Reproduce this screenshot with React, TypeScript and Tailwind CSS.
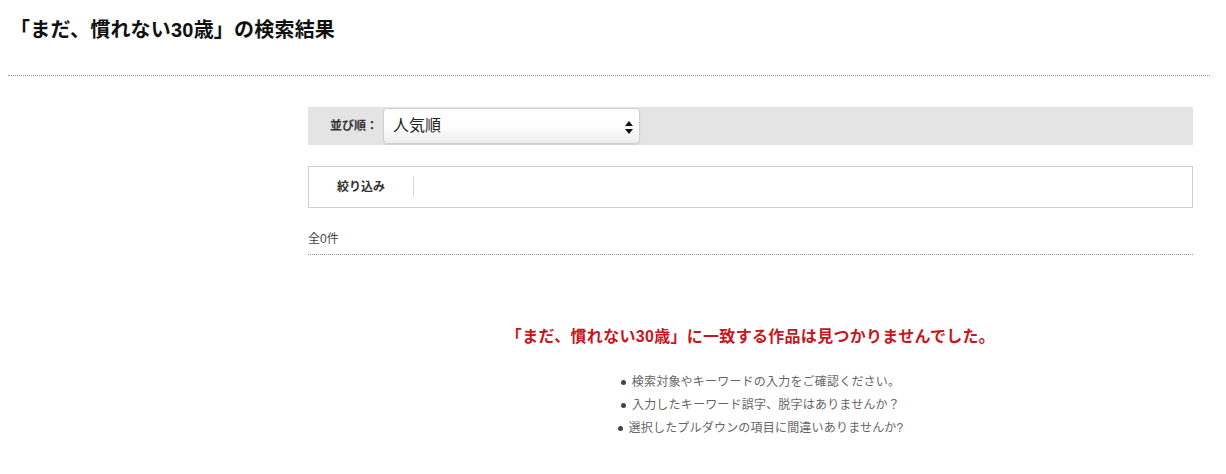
export default function App() {
  const tips = [
    '検索対象やキーワードの入力をご確認ください。',
    '入力したキーワード誤字、脱字はありませんか？',
    '選択したプルダウンの項目に間違いありませんか?',
  ];

  return (
    <div
      className="w-[1226px] h-[474px] bg-white text-[#333]"
      style={{ fontFamily: '"Liberation Sans", "Noto Sans CJK JP", sans-serif' }}
    >
      {/* Heading */}
      <div className="px-[10px] pt-[18px] h-[75px]">
        <h1 className="text-[20px] leading-[24px] font-bold tracking-[0.2px] text-[#111]">
          「まだ、慣れない30歳」の検索結果
        </h1>
      </div>
      <div className="mx-[8px] w-[1202px] border-t border-dotted border-[#999]" />

      {/* Main column */}
      <div className="ml-[308px] w-[885px] pt-[31px]">
        {/* Sort bar */}
        <div className="flex items-center h-[38px] bg-[#e4e4e4]">
          <span className="w-[75px] pl-[22px] text-[12px] font-bold text-[#333]">並び順：</span>
          <div className="relative flex items-center w-[257px] h-[36px] rounded-[4px] border border-[#d0d0d0] bg-gradient-to-b from-white via-white to-[#ededed] shadow-[0_1px_1px_rgba(0,0,0,0.08)]">
            <span className="pl-[9px] text-[16px] text-[#222]">人気順</span>
            <svg className="absolute right-[6px] top-[12px]" width="8" height="13" viewBox="0 0 8 13">
              <path d="M4 0 L8 5 L0 5 Z" fill="#111" />
              <path d="M0 8 L8 8 L4 13 Z" fill="#111" />
            </svg>
          </div>
        </div>

        {/* Filter */}
        <div className="mt-[21px] flex items-center h-[42px] border border-[#cfcfcf]">
          <span className="pl-[28px] w-[104px] text-[12px] font-bold text-[#333]">絞り込み</span>
          <div className="w-px h-[20px] bg-[#d6d6d6]" />
        </div>

        {/* Count */}
        <div className="pt-[23px] pb-[7px] text-[12px] leading-[16px] text-[#444]">全0件</div>
        <div className="border-t border-dotted border-[#999]" />

        {/* No result */}
        <p className="mt-[72px] text-center text-[16px] leading-[20px] font-bold tracking-[0.3px] text-[#c8161d]">
          「まだ、慣れない30歳」に一致する作品は見つかりませんでした。
        </p>
        <ul className="mt-[24px] pl-[20px] text-center text-[12px] leading-[22px] tracking-[0.2px] text-[#666]">
          {tips.map((t) => (
            <li key={t} className="flex items-center justify-center gap-[6px] mb-[1px]">
              <span className="inline-block w-[5px] h-[5px] rounded-full bg-[#444]" />
              {t}
            </li>
          ))}
        </ul>
      </div>
    </div>
  );
}
